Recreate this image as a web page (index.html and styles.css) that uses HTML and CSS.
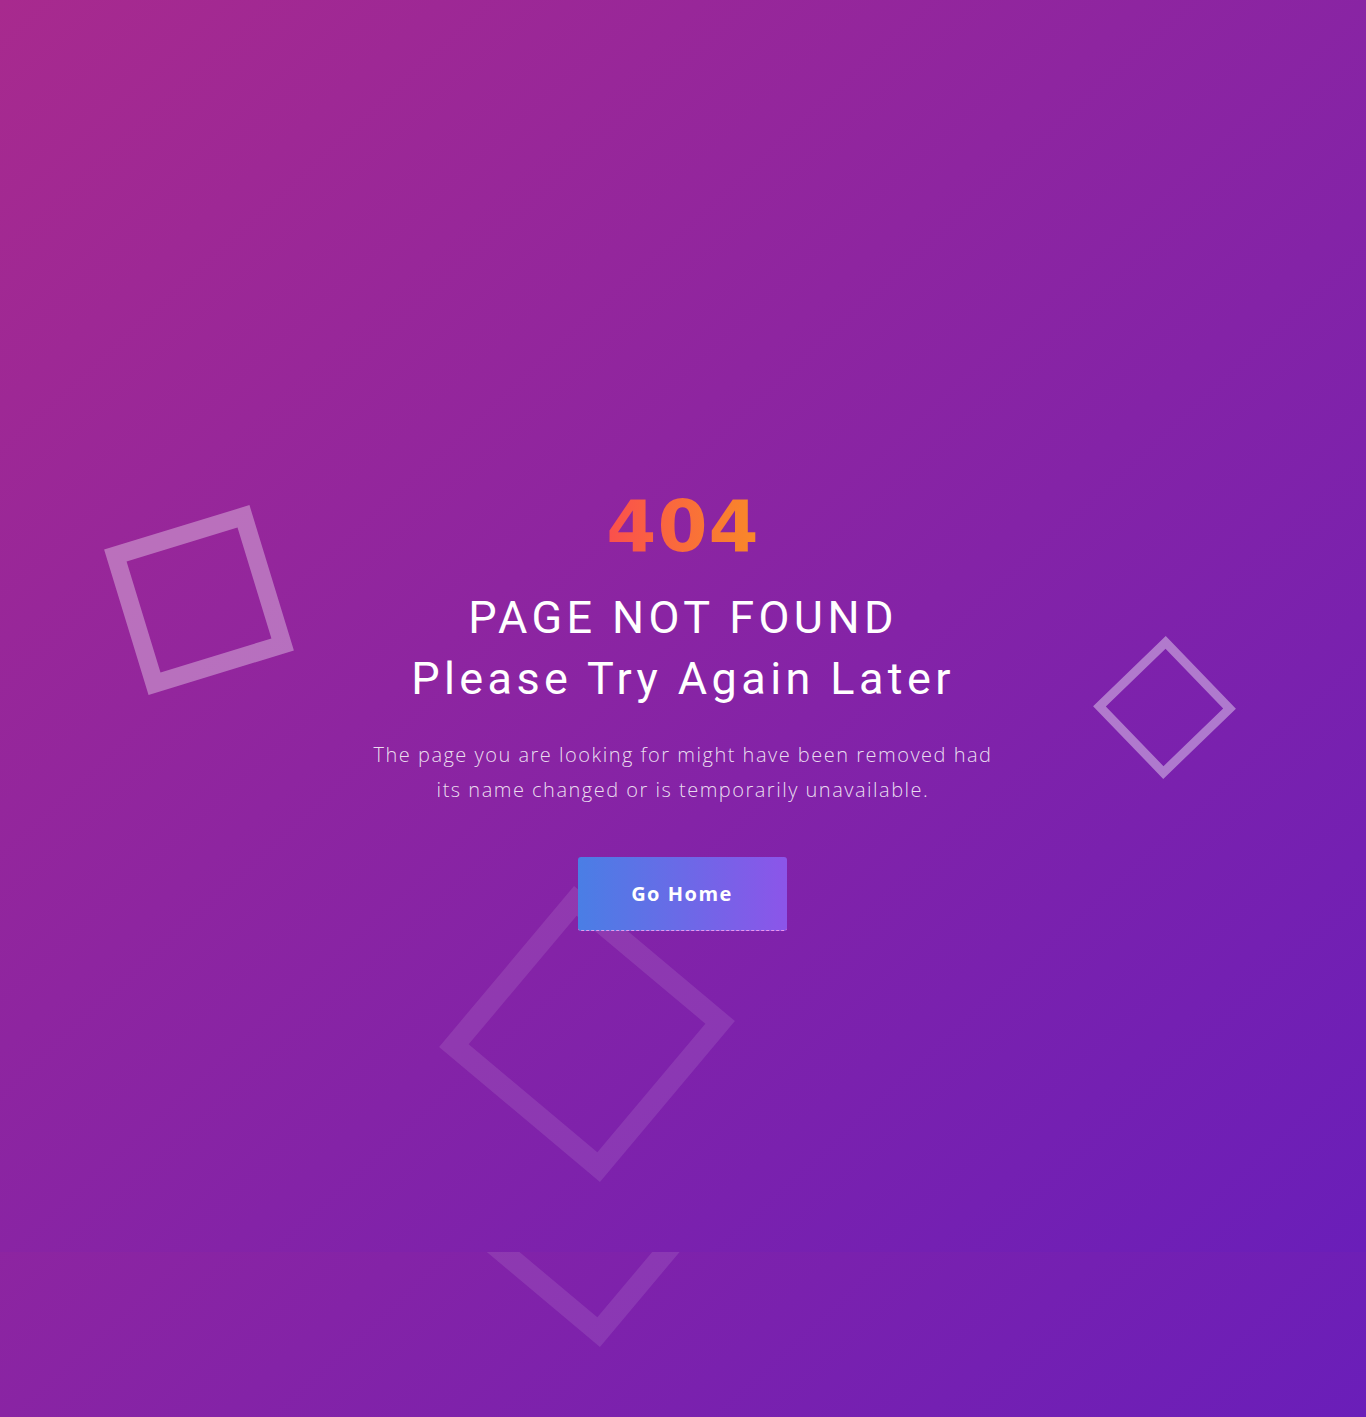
FILE: index.html
```html
<!DOCTYPE html>
<html lang="en">
<head>
<meta charset="utf-8">
<title>404 - Page Not Found</title>
<link rel="stylesheet" href="styles.css">
</head>
<body>
<section class="hero">
  <div class="shape shape-left"></div>
  <div class="shape shape-right"></div>
  <div class="shape shape-big"></div>
  <div class="content">
    <h1 class="code">404</h1>
    <h2 class="title">PAGE NOT FOUND<br>Please Try Again Later</h2>
    <p class="text">The page you are looking for might have been removed had<br>its name changed or is temporarily unavailable.</p>
    <a class="btn" href="#">Go Home</a>
  </div>
</section>
<div class="band">
  <div class="shape shape-big shape-big-copy"></div>
</div>
</body>
</html>
```
FILE: styles.css
```css
html, body {
  margin: 0;
  padding: 0;
}
body {
  width: 1366px;
  overflow: hidden;
  background: #7d22a8;
}
.hero,
.band {
  position: relative;
  overflow: hidden;
  background-image: linear-gradient(to bottom right, #a82a8e 0%, #6a1eb9 100%);
  background-size: 1366px 1252px;
  background-repeat: no-repeat;
}
.hero {
  height: 1252px;
  box-sizing: border-box;
  padding-top: 490px;
}
.band {
  height: 165px;
  background-position: 0 -1087px;
}
.shape {
  position: absolute;
  box-sizing: border-box;
}
.shape-left {
  left: 123px;
  top: 524px;
  width: 152px;
  height: 152px;
  border: 18px solid rgba(255, 255, 255, 0.34);
  transform: rotate(-17deg);
}
.shape-right {
  left: 1114px;
  top: 657px;
  width: 101px;
  height: 101px;
  border: 9px solid rgba(255, 255, 255, 0.4);
  transform: rotate(46deg);
}
.shape-big {
  left: 482px;
  top: 929px;
  width: 210px;
  height: 210px;
  border: 21px solid rgba(255, 255, 255, 0.1);
  transform: rotate(40deg);
}
.shape-big-copy {
  top: -158px;
}
.content {
  position: relative;
  z-index: 1;
  display: flex;
  flex-direction: column;
  align-items: center;
  text-align: center;
}
.code {
  margin: 0;
  font-family: "DejaVu Sans", Roboto, sans-serif;
  font-weight: 700;
  font-size: 72px;
  line-height: 72px;
  letter-spacing: 1px;
  padding-left: 0;
  background-image: linear-gradient(to right, #fa4f4d 0%, #f98a28 100%);
  -webkit-background-clip: text;
  background-clip: text;
  color: transparent;
}
.title {
  margin: 25px 0 0;
  font-family: Roboto, "Liberation Sans", sans-serif;
  font-weight: 400;
  font-size: 45px;
  line-height: 61px;
  letter-spacing: 4.4px;
  color: #ffffff;
}
.text {
  margin: 28px 0 0;
  font-family: "Open Sans", "DejaVu Sans", sans-serif;
  font-weight: 300;
  font-size: 20px;
  line-height: 35px;
  letter-spacing: 1.5px;
  color: rgba(255, 255, 255, 0.85);
}
.btn {
  margin-top: 50px;
  margin-left: -2px;
  display: flex;
  align-items: center;
  justify-content: center;
  box-sizing: border-box;
  width: 209px;
  height: 74px;
  border-radius: 3px;
  border-bottom: 1px dashed rgba(255, 160, 235, 0.85);
  background-image: linear-gradient(to right, #4a7ee5 0%, #8c55e9 100%);
  font-family: "Open Sans", "DejaVu Sans", sans-serif;
  font-weight: 700;
  font-size: 20px;
  letter-spacing: 1.5px;
  color: #ffffff;
  text-decoration: none;
}
```
